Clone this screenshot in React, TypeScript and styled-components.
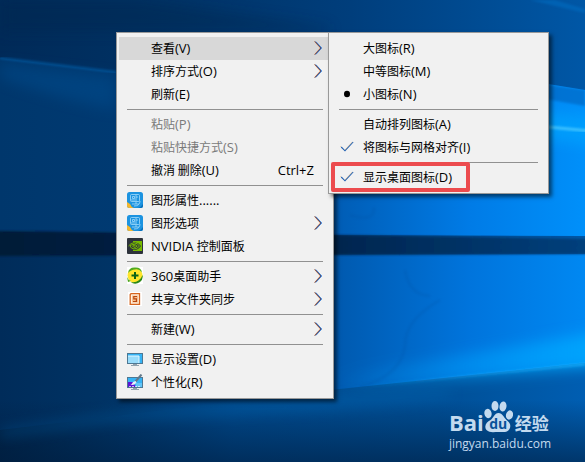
import React from "react";
import styled, { createGlobalStyle } from "styled-components";

const GlobalStyle = createGlobalStyle`
  *, *::before, *::after { box-sizing: border-box; }
  body { margin: 0; background: #003a76; overflow: hidden; }
`;

const Desktop = styled.main`
  position: relative;
  min-height: 100vh;
  font-family: "Noto Sans CJK SC", "Open Sans", sans-serif;
  font-size: 12px;
  color: #000;
`;

const Wallpaper = styled.svg`
  position: absolute;
  inset: 0;
  width: 100%;
  height: 100%;
`;

const Menus = styled.div`
  position: relative;
  display: flex;
  align-items: flex-start;
  padding: 32px 0 0 116px;
`;

const Menu = styled.div<{ $minWidth: number; $inset?: number }>`
  position: relative;
  min-width: ${(p) => p.$minWidth}px;
  padding: 4px 2px;
  background: #f1f1f1;
  border: 1px solid #999;
  box-shadow: 3px 3px 4px rgba(0, 0, 0, 0.55);
  margin-left: ${(p) => (p.$inset ? -p.$inset : 0)}px;
`;

const Item = styled.button<{ $active?: boolean }>`
  position: relative;
  display: grid;
  grid-template-columns: 24px 1fr auto 9px;
  align-items: center;
  width: 100%;
  height: 23px;
  padding: 0 8px 2px;
  border: 0;
  background: ${(p) => (p.$active ? "#d8d8d8" : "transparent")};
  color: inherit;
  font: inherit;
  line-height: 20px;
  text-align: left;
  white-space: nowrap;
  &:disabled { color: #7a7a7a; }
`;

const OptionItem = styled(Item)<{ $marked?: boolean }>`
  grid-template-columns: 24px 1fr;
  &::after {
    content: "";
    display: ${(p) => (p.$marked ? "block" : "none")};
    position: absolute;
    top: -4px;
    bottom: -3px;
    left: 0;
    width: 139px;
    border: 4px solid #ec4b4e;
    border-radius: 2px;
  }
`;

const IconSlot = styled.span`
  display: flex;
  align-items: center;
  justify-content: center;
  width: 16px;
  svg { display: block; flex: none; }
`;

const Label = styled.span`
  display: flex;
  align-items: baseline;
  white-space: pre;
`;

const Latin = styled.span`
  font-family: "Open Sans", sans-serif;
  font-size: 13px;
`;

const Separator = styled.hr`
  height: 1px;
  margin: 3px 8px;
  border: 0;
  background: #919191;
`;

const Watermark = styled.a`
  position: absolute;
  right: 34px;
  bottom: 10px;
  display: flex;
  flex-direction: column;
  color: #c3daef;
  text-decoration: none;
  font-family: "Open Sans", "Noto Sans CJK SC", sans-serif;
`;

const Brand = styled.span`
  display: flex;
  align-items: flex-end;
  height: 36px;
`;

const BrandLatin = styled.span`
  font: 700 22px/28px "Open Sans", sans-serif;
`;

const BrandHan = styled.span`
  margin-left: 2px;
  font: 700 17px/26px "Noto Sans CJK SC", sans-serif;
`;

const PawBox = styled.span`
  position: relative;
  width: 29px;
  height: 36px;
`;

const PawText = styled.span`
  position: absolute;
  left: 0;
  right: 0;
  bottom: 4px;
  text-align: center;
  color: #08529a;
  font: 700 14px/16px "Open Sans", sans-serif;
`;

const Site = styled.span`
  font-size: 12px;
  line-height: 16px;
`;

const Arrow = () => (
  <svg width="9" height="14" viewBox="0 0 9 14" fill="none" strokeWidth="1">
    <path d="M0.5 0.5 6.5 7 0.5 13.5" stroke="#e0803c" />
    <path d="M1.8 0.5 7.8 7 1.8 13.5" stroke="#4a9cf0" />
    <path d="M1.1 0.5 7.1 7 1.1 13.5" stroke="#25245c" strokeWidth=".8" />
  </svg>
);

const Check = () => (
  <svg width="14" height="12" viewBox="0 0 14 12" fill="none" strokeWidth="1.1">
    <path d="M0.5 5.5 4.5 9.5 12.5 1" stroke="#dfa45c" strokeWidth=".8" />
    <path d="M1.2 6 5 9.8 13.2 1" stroke="#2566b8" />
  </svg>
);

const Bullet = () => (
  <svg width="16" height="8" viewBox="0 0 16 8">
    <ellipse cx="8" cy="4" rx="3" ry="3.2" fill="#000" />
  </svg>
);

const GraphicsIcon = () => (
  <svg width="16" height="16" viewBox="0 0 16 16">
    <rect width="16" height="16" rx="2.5" fill="#1c93e0" />
    <path d="M0 10v3.5Q0 16 2.5 16H7Q4 15 3 12Z" fill="#f5b62c" />
    <path d="M11 16q3-1 5-4v2q0 2-2 2Z" fill="#0870bb" />
    <g fill="none" stroke="#a5dcfb" strokeWidth=".8">
      <rect x="3.5" y="2.500" width="9" height="7" rx="1" />
      <path d="M5.500 4.500h2v2h-2zM9 3v4M9 5h2M4 8h6M5 12h7M7 14q6 0 6-5M9 10v2" />
    </g>
  </svg>
);

const NvidiaIcon = () => (
  <svg width="16" height="16" viewBox="0 0 16 16">
    <rect width="16" height="16" rx="1" fill="#2d323b" />
    <path d="M6 3h9v10H6Z" fill="#76b900" />
    <path d="M1 8Q4 3.8 8 4.2 12 4.8 14 8 11 12.2 7 12 3 11.5 1 8Z" fill="#2d323b" />
    <path
      d="M1.5 8Q4 4.7 7 4.8 10.5 5 12.5 8 10 11.2 7 11 3.8 10.5 3 8 5 5.9 7.5 6.5 9.5 7 10.2 8 8.5 9.8 6.8 9.3L5.500 8Q7 7 8.300 8"
      fill="none"
      stroke="#76b900"
    />
  </svg>
);

const Icon360 = () => (
  <svg width="16" height="17" viewBox="0 0 16 17">
    <rect width="16" height="17" fill="#fff" />
    <circle cx="8" cy="8.5" r="7.5" fill="#ffe52b" />
    <path d="M1 6Q2 0 8 .5q6-.5 7 5-3-4-7-3-4 0-7 3.5Z" fill="#50a91f" />
    <path d="M15.5 8q1 4-2.500 7-5 3.500-9.500 0 5 1 8-1.500 3-2 4-5.500Z" fill="#2b8816" />
    <path d="M0 10q1 3 4 4l-3 1Z" fill="#4ba51d" />
    <path d="M8 5v7M4.500 8.500h7" stroke="#0b6417" strokeWidth="2" />
  </svg>
);

const ShareIcon = () => (
  <svg width="14" height="14" viewBox="0 0 14 14">
    <rect width="14" height="14" fill="#fff" />
    <path d="M3 1.7h8.500v10.600H2.200V2.500Z" fill="#fff2e2" stroke="#d6651e" strokeWidth="1.300" />
    <path d="M4 3.500h6v7H4Z" fill="#f6c090" />
    <path d="M9 4.500H5.800v2.300h2.600v2.700H5" fill="none" stroke="#b94710" strokeWidth="1.200" />
  </svg>
);

const DisplayIcon = () => (
  <svg width="16" height="14" viewBox="0 0 16 14">
    <rect x=".5" y="1.5" width="15" height="10" fill="#35b3f5" stroke="#4e7893" />
    <path d="M1 4h11v7H1Z" fill="#99dcfb" />
    <path d="M1 4h11v7" fill="none" stroke="#e3f7ff" />
    <path d="M6 12h4v1h2v1H4v-1h2Z" fill="#91a2ad" />
  </svg>
);

const PersonalizeIcon = () => (
  <svg width="16" height="16" viewBox="0 0 16 16">
    <rect x=".5" y="3.5" width="15" height="10" fill="#35b3f5" stroke="#4e7893" />
    <path d="M1 8h5l3 5H1Z" fill="#5b14d6" />
    <path d="M9 9h6v4H9Z" fill="#62c5f7" />
    <path d="m14.5 .5-6 7" stroke="#63798a" strokeWidth="2" />
    <path d="M8.5 7 6 8q-1 2-2.500 2.500 4 1.500 6-2Z" fill="#e9f2f7" />
    <path d="M2 12.500h12" stroke="#fff" strokeWidth=".7" strokeDasharray="2 1" />
    <path d="M6 14h4v1h2v1H4v-1h2Z" fill="#91a2ad" />
  </svg>
);

const Paw = () => (
  <svg width="29" height="34" viewBox="0 0 29 34" fill="#c3daef">
    <ellipse cx="4" cy="13.5" rx="3.6" ry="4.7" transform="rotate(-12 4 13.5)" />
    <ellipse cx="11" cy="6" rx="3.5" ry="5" />
    <ellipse cx="19" cy="6.5" rx="3.5" ry="5" transform="rotate(10 19 6.5)" />
    <ellipse cx="25.5" cy="15" rx="3.5" ry="4.7" transform="rotate(15 25.5 15)" />
    <path d="M14.500 13c4 0 5 4 8 7 3 2.500 5 5 3 9-2 4-6 3-11 3s-9 1-12-2c-3-4 0-8 4-10 3-2 4-7 8-7Z" />
  </svg>
);

const Scene = () => (
  <Wallpaper viewBox="0 0 585 462" preserveAspectRatio="none" aria-hidden="true">
    <defs>
      <linearGradient id="sky">
        <stop offset="0" stopColor="#002a58" />
        <stop offset=".3" stopColor="#003366" />
        <stop offset=".6" stopColor="#003e7c" />
        <stop offset="1" stopColor="#0057a6" />
      </linearGradient>
      <linearGradient id="pane">
        <stop offset="0" stopColor="#00376c" />
        <stop offset=".2" stopColor="#003a72" />
        <stop offset=".57" stopColor="#005cb4" />
        <stop offset=".8" stopColor="#007be6" />
        <stop offset="1" stopColor="#0090fa" />
      </linearGradient>
      <linearGradient id="lower">
        <stop offset="0" stopColor="#002c5a" />
        <stop offset=".2" stopColor="#003466" />
        <stop offset=".57" stopColor="#0059ae" />
        <stop offset=".8" stopColor="#0074dc" />
        <stop offset="1" stopColor="#0088f2" />
      </linearGradient>
      <linearGradient id="bar">
        <stop offset="0" stopColor="#001a38" />
        <stop offset=".55" stopColor="#00244c" />
        <stop offset="1" stopColor="#00407d" />
      </linearGradient>
      <linearGradient id="floor">
        <stop offset="0" stopColor="#002448" />
        <stop offset=".4" stopColor="#00498c" />
        <stop offset=".75" stopColor="#004f96" />
        <stop offset="1" stopColor="#005eb2" />
      </linearGradient>
      <linearGradient id="shade" x2="0" y2="1">
        <stop offset="0" stopColor="#001c3d" stopOpacity="0" />
        <stop offset="1" stopColor="#001c3d" stopOpacity=".6" />
      </linearGradient>
      <linearGradient id="glow">
        <stop offset="0" stopColor="#00a2ff" stopOpacity="0" />
        <stop offset="1" stopColor="#00a8ff" stopOpacity=".9" />
      </linearGradient>
      <linearGradient id="ray" gradientUnits="userSpaceOnUse" x1="350" x2="585" y1="0" y2="0">
        <stop offset="0" stopColor="#1db2ff" stopOpacity="0" />
        <stop offset="1" stopColor="#1db2ff" stopOpacity=".6" />
      </linearGradient>
      <filter id="soft" x="-20%" y="-50%" width="140%" height="200%">
        <feGaussianBlur stdDeviation="7" />
      </filter>
      <filter id="edge" x="-5%" y="-5%" width="110%" height="110%">
        <feGaussianBlur stdDeviation="1" />
      </filter>
    </defs>
    <rect width="585" height="462" fill="url(#sky)" />
    <path d="M0 58 116 72 400 60 548 84 585 90V236L330 235 0 232Z" fill="url(#pane)" />
    <path d="M0 58 116 72" stroke="#0068b6" strokeWidth="2" opacity=".6" filter="url(#edge)" />
    <path d="M0 64 116 77 116 110Q60 100 0 78Z" fill="#00559b" opacity=".35" filter="url(#soft)" />
    <path d="M480 105 600 118V146L480 132Z" fill="#00a7ff" opacity=".6" filter="url(#soft)" />
    <path d="M540 84 585 90V106L540 98Z" fill="#0064bd" opacity=".6" filter="url(#edge)" />
    <path d="M500 121 548 127 590 131" fill="none" stroke="#50ccff" strokeWidth="3" opacity=".75" filter="url(#edge)" />
    <path d="M0 0h140L330 27v5H0Z" fill="#00264e" opacity=".4" filter="url(#soft)" />
    <path d="M530 0 585 13V9L555 0Z" fill="#006fc5" opacity=".5" filter="url(#edge)" />
    <path d="M0 255 585 254V363L330 392 0 430Z" fill="url(#lower)" />
    <path d="M-5 231 330 235 590 239V254L330 255-5 256Z" fill="url(#bar)" filter="url(#edge)" />
    <path d="M330 390 585 363V462H0V430Z" fill="url(#floor)" />
    <path d="M0 400h585v62H0Z" fill="url(#shade)" />
    <path d="M330 376 600 332V366L330 393Z" fill="url(#glow)" filter="url(#soft)" />
    <path d="M350 388 585 364" stroke="url(#ray)" strokeWidth="3" filter="url(#edge)" />
    <path d="M0 430 116 413 330 398 450 390V398L330 408 116 420 0 436Z" fill="#006ab8" opacity=".45" filter="url(#soft)" />
    <path d="M405 270q4 25 25 26M350 215q25 8 24-8M440 300q-35 20-35 45-3 30-45 42" fill="none" stroke="#004d9b" strokeWidth="3" opacity=".15" filter="url(#edge)" />
  </Wallpaper>
);

type Entry = {
  text?: string;
  latin?: string;
  lead?: string;
  icon?: React.ReactNode;
  keys?: string;
  sub?: boolean;
  active?: boolean;
  disabled?: boolean;
};

const groups: Entry[][] = [
  [
    { text: "查看", latin: "(V)", sub: true, active: true },
    { text: "排序方式", latin: "(O)", sub: true },
    { text: "刷新", latin: "(E)" },
  ],
  [
    { text: "粘贴", latin: "(P)", disabled: true },
    { text: "粘贴快捷方式", latin: "(S)", disabled: true },
    { text: "撤消 删除", latin: "(U)", keys: "Ctrl+Z" },
  ],
  [
    { text: "图形属性", latin: "......", icon: <GraphicsIcon /> },
    { text: "图形选项", icon: <GraphicsIcon />, sub: true },
    { lead: "NVIDIA ", text: "控制面板", icon: <NvidiaIcon /> },
  ],
  [
    { lead: "360", text: "桌面助手", icon: <Icon360 />, sub: true },
    { text: "共享文件夹同步", icon: <ShareIcon />, sub: true },
  ],
  [{ text: "新建", latin: "(W)", sub: true }],
  [
    { text: "显示设置", latin: "(D)", icon: <DisplayIcon /> },
    { text: "个性化", latin: "(R)", icon: <PersonalizeIcon /> },
  ],
];

type Option = {
  text: string;
  latin: string;
  mark?: "dot" | "check";
  radio?: boolean;
  highlighted?: boolean;
};

const options: Option[][] = [
  [
    { text: "大图标", latin: "(R)", radio: true },
    { text: "中等图标", latin: "(M)", radio: true },
    { text: "小图标", latin: "(N)", radio: true, mark: "dot" },
  ],
  [
    { text: "自动排列图标", latin: "(A)" },
    { text: "将图标与网格对齐", latin: "(I)", mark: "check" },
  ],
  [{ text: "显示桌面图标", latin: "(D)", mark: "check", highlighted: true }],
];

export default function App() {
  return (
    <Desktop>
      <GlobalStyle />
      <Scene />
      <Menus>
        <Menu role="menu" $minWidth={218}>
          {groups.map((group, g) => (
            <React.Fragment key={g}>
              {g > 0 && <Separator />}
              {group.map((e) => (
                <Item
                  key={e.text}
                  type="button"
                  role="menuitem"
                  aria-haspopup={e.sub ? "menu" : undefined}
                  disabled={e.disabled}
                  $active={e.active}
                >
                  <IconSlot>{e.icon}</IconSlot>
                  <Label>
                    {e.lead && <Latin>{e.lead}</Latin>}
                    {e.text}
                    {e.latin && <Latin>{e.latin}</Latin>}
                  </Label>
                  <Latin>{e.keys}</Latin>
                  {e.sub && <Arrow />}
                </Item>
              ))}
            </React.Fragment>
          ))}
        </Menu>
        <Menu role="menu" $minWidth={221} $inset={6}>
          {options.map((group, g) => (
            <React.Fragment key={g}>
              {g > 0 && <Separator />}
              {group.map((o) => (
                <OptionItem
                  key={o.text}
                  type="button"
                  role={o.radio ? "menuitemradio" : "menuitemcheckbox"}
                  aria-checked={Boolean(o.mark)}
                  $marked={o.highlighted}
                >
                  <IconSlot>
                    {o.mark === "dot" && <Bullet />}
                    {o.mark === "check" && <Check />}
                  </IconSlot>
                  <Label>
                    {o.text}
                    <Latin>{o.latin}</Latin>
                  </Label>
                </OptionItem>
              ))}
            </React.Fragment>
          ))}
        </Menu>
      </Menus>
      <Watermark href="#">
        <Brand>
          <BrandLatin>Bai</BrandLatin>
          <PawBox>
            <Paw />
            <PawText>du</PawText>
          </PawBox>
          <BrandHan>经验</BrandHan>
        </Brand>
        <Site>jingyan.baidu.com</Site>
      </Watermark>
    </Desktop>
  );
}
